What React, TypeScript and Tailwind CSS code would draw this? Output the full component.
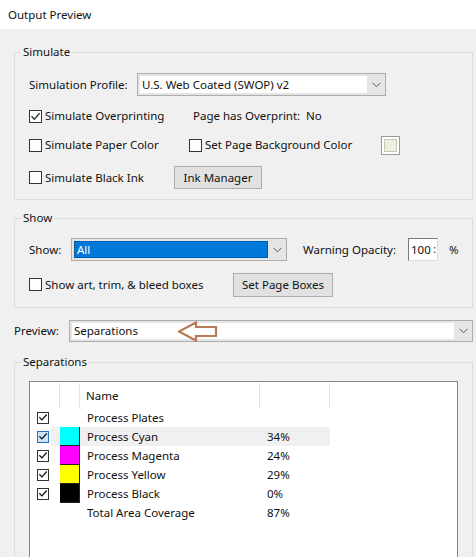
import React from "react";

const font = { fontFamily: '"Noto Sans", "Open Sans", sans-serif' };

function Tick({ color = "#222" }: { color?: string }) {
	return (
		<svg width="11" height="11" viewBox="0 0 11 11">
			<path d="M1.5 5.2 L4.3 8.2 L9.6 2.2" fill="none" stroke={color} strokeWidth="1.3" />
		</svg>
	);
}

function CheckBox({ checked = false }: { checked?: boolean }) {
	return (
		<span className="flex h-[13px] w-[13px] shrink-0 items-center justify-center border border-[#333] bg-white">
			{checked && <Tick color="#333" />}
		</span>
	);
}

function Chevron() {
	return (
		<svg width="9" height="6" viewBox="0 0 9 6">
			<path d="M0.5 0.8 L4.5 4.8 L8.5 0.8" fill="none" stroke="#555" strokeWidth="1" />
		</svg>
	);
}

function Combo({
	text,
	className,
	selected = false,
}: {
	text: string;
	className: string;
	selected?: boolean;
}) {
	return (
		<div className={`flex border border-[#adadad] bg-[#e5e5e5] ${className}`}>
			<div
				className={`my-[2px] ml-[2px] flex flex-1 items-center overflow-hidden ${
					selected
						? "border border-dotted border-[#333] bg-[#0078d7] text-white"
						: "bg-white"
				}`}
			>
				<span className="pl-[2px] leading-none">{text}</span>
			</div>
			<div className="flex w-[18px] items-center justify-center">
				<Chevron />
			</div>
		</div>
	);
}

function Button({ label, className }: { label: string; className: string }) {
	return (
		<div
			className={`flex items-center justify-center border border-[#adadad] bg-[#e1e1e1] ${className}`}
		>
			{label}
		</div>
	);
}

const rows = [
	{ name: "Process Plates", color: "", pct: "" },
	{ name: "Process Cyan", color: "bg-[#00ffff]", pct: "34%", hi: true },
	{ name: "Process Magenta", color: "bg-[#ff00ff]", pct: "24%" },
	{ name: "Process Yellow", color: "bg-[#ffff00]", pct: "29%" },
	{ name: "Process Black", color: "bg-black", pct: "0%" },
];

export default function App() {
	return (
		<div
			className="relative h-[557px] w-[476px] overflow-hidden bg-[#f0f0f0] text-[11.5px] text-[#111]"
			style={font}
		>
			<div className="flex h-[29px] items-center bg-white pl-[8px]">Output Preview</div>

			{/* Simulate */}
			<fieldset className="ml-[14px] mt-[15px] w-[459px] border border-[#dcdcdc] pb-[10px] pl-[14px]">
				<legend className="ml-[-8px] px-[2px] leading-[16px]">Simulate</legend>
				<div className="mt-[13px] flex h-[23px] items-center">
					<span className="w-[108px]">Simulation Profile:</span>
					<Combo text="U.S. Web Coated (SWOP) v2" className="h-[23px] w-[249px]" />
				</div>
				<div className="mt-[12px] flex h-[16px] items-center">
					<CheckBox checked />
					<span className="ml-[3px] w-[148px]">Simulate Overprinting</span>
					<span className="w-[113px]">Page has Overprint:</span>
					<span>No</span>
				</div>
				<div className="mt-[12px] flex h-[18px] items-center">
					<CheckBox />
					<span className="ml-[3px] w-[144px]">Simulate Paper Color</span>
					<CheckBox />
					<span className="ml-[3px] w-[176px]">Set Page Background Color</span>
					<span className="h-[19px] w-[19px] border border-[#9a9a9a] bg-white p-[2px]">
						<span className="block h-full w-full border border-[#c8c8b8] bg-[#efefdf]" />
					</span>
				</div>
				<div className="mt-[12px] flex h-[23px] items-center">
					<CheckBox />
					<span className="ml-[3px] w-[129px]">Simulate Black Ink</span>
					<Button label="Ink Manager" className="h-[23px] w-[88px]" />
				</div>
			</fieldset>

			{/* Show */}
			<fieldset className="ml-[14px] mt-[10px] w-[459px] border border-[#dcdcdc] pb-[11px] pl-[14px]">
				<legend className="ml-[-8px] px-[2px] leading-[16px]">Show</legend>
				<div className="mt-[12px] flex h-[23px] items-center">
					<span className="w-[42px]">Show:</span>
					<Combo text="All" selected className="h-[23px] w-[216px]" />
					<span className="ml-[16px] w-[105px]">Warning Opacity:</span>
					<div className="flex h-[23px] w-[30px] items-center justify-between border border-[#7a7a7a] border-b-[#dcdcdc] border-r-[#dcdcdc] bg-white pl-[2px] pr-[1px]">
						<span>100</span>
						<span className="text-[10px]">:</span>
					</div>
					<span className="ml-[11px]">%</span>
				</div>
				<div className="mt-[12px] flex h-[23px] items-center">
					<CheckBox />
					<span className="ml-[3px] w-[188px]">Show art, trim, &amp; bleed boxes</span>
					<Button label="Set Page Boxes" className="h-[24px] w-[100px]" />
				</div>
			</fieldset>

			{/* Preview */}
			<div className="relative ml-[14px] mt-[12px] flex h-[22px] items-center">
				<span className="w-[55px]">Preview:</span>
				<Combo text="Separations" className="h-[22px] w-[404px]" />
				<svg
					className="absolute left-[164px] top-[1px]"
					width="40"
					height="21"
					viewBox="0 0 40 21"
				>
					<path
						d="M1 10.5 L18 1.5 L18 6 L38 6 L38 15 L18 15 L18 19.5 Z"
						fill="none"
						stroke="#b87a55"
						strokeWidth="2.2"
						strokeLinejoin="miter"
					/>
				</svg>
			</div>

			{/* Separations */}
			<fieldset className="ml-[14px] mt-[12px] w-[459px] border border-[#dcdcdc] pl-[14px]">
				<legend className="ml-[-8px] px-[2px] leading-[16px]">Separations</legend>
				<div className="mt-[11px] h-[220px] w-[429px] border border-[#828790] bg-white">
					<div className="mt-[1px] flex h-[25px] items-center">
						<div className="h-full w-[30px] border-r border-[#e5e5e5]" />
						<div className="h-full w-[20px] border-r border-[#e5e5e5]" />
						<div className="flex h-full w-[180px] items-center border-r border-[#e5e5e5] pl-[6px]">
							Name
						</div>
						<div className="h-full w-[70px] border-r border-[#e5e5e5]" />
					</div>
					{rows.map((r) => (
						<div key={r.name} className="flex h-[19px] items-center">
							<div className="flex w-[21px] justify-end pr-[2px]">
								<span
									className={`flex h-[12px] w-[12px] items-center justify-center border ${
										r.hi ? "border-[#2670c0] bg-[#cce4f7]" : "border-[#333] bg-white"
									}`}
								>
									<Tick color="#111" />
								</span>
							</div>
							<div className={`flex h-full w-[279px] ${r.hi ? "bg-[#f0f0f0]" : ""}`}>
								<div className="w-[9px]" />
								<div
									className={`h-full w-[20px] ${r.color} ${
										r.color ? "border-b border-r border-[#222]" : ""
									}`}
								/>
								<div className="flex w-[180px] items-center pl-[7px]">{r.name}</div>
								<div className="flex w-[70px] items-center pl-[7px]">{r.pct}</div>
							</div>
						</div>
					))}
					<div className="flex h-[19px] items-center">
						<div className="w-[50px]" />
						<div className="w-[180px] pl-[7px]">Total Area Coverage</div>
						<div className="w-[70px] pl-[7px]">87%</div>
					</div>
				</div>
			</fieldset>
		</div>
	);
}
